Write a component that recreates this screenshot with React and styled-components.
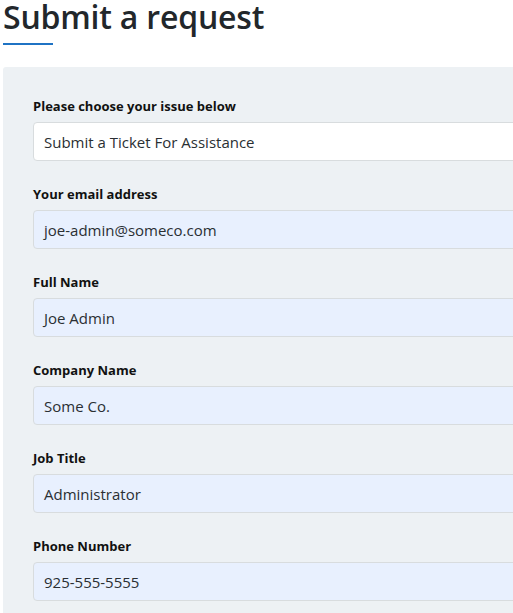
import styled, { createGlobalStyle } from "styled-components";

const GlobalStyle = createGlobalStyle`
	body {
		margin: 0;
		background: #fff;
		font-family: "Open Sans", "Noto Sans", sans-serif;
		color: #2f3941;
		overflow: hidden;
	}
`;

const fields = [
	{ label: "Your email address", value: "joe-admin@someco.com" },
	{ label: "Full Name", value: "Joe Admin" },
	{ label: "Company Name", value: "Some Co." },
	{ label: "Job Title", value: "Administrator" },
	{ label: "Phone Number", value: "925-555-5555" },
];

export default function App() {
	return (
		<Page>
			<GlobalStyle />
			<Title>Submit a request</Title>
			<Underline />
			<FormPanel>
				<Field>
					<Label>Please choose your issue below</Label>
					<Box>Submit a Ticket For Assistance</Box>
				</Field>
				{fields.map((f) => (
					<Field key={f.label}>
						<Label>{f.label}</Label>
						<Box $filled>{f.value}</Box>
					</Field>
				))}
			</FormPanel>
		</Page>
	);
}

let Page = styled.div`
	width: 600px;
	padding: 0 0 0 3px;
`;

let Title = styled.h1`
	margin: 0;
	font-size: 32px;
	font-weight: 600;
	line-height: 33px;
	letter-spacing: -0.2px;
	color: #22272b;
`;

let Underline = styled.div`
	width: 50px;
	height: 2px;
	margin-top: 10px;
	background: #1f73c4;
`;

let FormPanel = styled.div`
	margin-top: 22px;
	padding: 31px 0 20px 30px;
	background: #edf1f4;
	border-radius: 3px 0 0 0;
	display: flex;
	flex-direction: column;
	gap: 25px;
`;

let Field = styled.div`
	display: flex;
	flex-direction: column;
	gap: 8px;
`;

let Label = styled.label`
	font-size: 13px;
	font-weight: 700;
	line-height: 16px;
	color: #111;
`;

let Box = styled.div`
	box-sizing: border-box;
	height: 39px;
	padding: 0 10px;
	display: flex;
	align-items: center;
	font-size: 15px;
	color: #2a2f33;
	background: ${(p) => (p.$filled ? "#e8f0fe" : "#fff")};
	border: 1px solid #d8dcde;
	border-radius: 4px;
`;
